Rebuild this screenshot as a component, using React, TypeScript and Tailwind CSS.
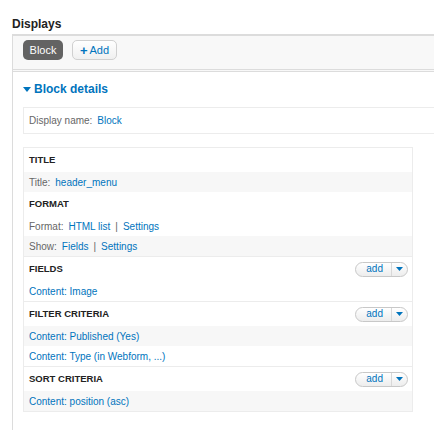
import React from 'react';

type Row = { label?: string; parts: string[]; shaded?: boolean };
type Section = { title: string; add?: boolean; rows: Row[] };

const sections: Section[] = [
  { title: 'Title', rows: [{ label: 'Title:', parts: ['header_menu'], shaded: true }] },
  {
    title: 'Format',
    rows: [
      { label: 'Format:', parts: ['HTML list', 'Settings'] },
      { label: 'Show:', parts: ['Fields', 'Settings'], shaded: true },
    ],
  },
  { title: 'Fields', add: true, rows: [{ parts: ['Content: Image'] }] },
  {
    title: 'Filter criteria',
    add: true,
    rows: [
      { parts: ['Content: Published (Yes)'], shaded: true },
      { parts: ['Content: Type (in Webform, ...)'] },
    ],
  },
  { title: 'Sort criteria', add: true, rows: [{ parts: ['Content: position (asc)'], shaded: true }] },
];

const AddButton: React.FC = () => (
  <div className="flex h-[15px] items-center rounded-full border border-[#c8c8c8] bg-gradient-to-b from-white to-[#ededed] text-[10px] leading-none text-[#0074bd]">
    <span className="pl-[10px] pr-[8px]">add</span>
    <span className="flex h-full items-center border-l border-[#d8d8d8] px-[4px]">
      <svg width="7" height="4" viewBox="0 0 7 4">
        <path d="M0 0h7L3.5 4z" fill="#0074bd" />
      </svg>
    </span>
  </div>
);

const App: React.FC = () => {
  return (
    <div className="h-[430px] w-[434px] overflow-hidden bg-white pt-[17px] font-['Liberation_Sans',Arial,sans-serif] text-[#333]">
      <h2 className="ml-[12px] text-[12px] font-bold leading-[14px] text-[#222]">Displays</h2>
      <div className="ml-[12px] mt-[3px] h-[400px] w-[440px] border-l border-t-2 border-[#dcdcdc]">
        <div className="flex h-[36px] items-start gap-[9px] border-b-[3px] border-double border-[#dcdcdc] bg-[#f8f8f8] pl-[10px] pt-[4px]">
          <span className="flex h-[20px] w-[40px] items-center justify-center rounded-[5px] bg-[#636363] text-[11px] text-white">
            Block
          </span>
          <span className="flex h-[20px] w-[45px] items-center justify-center gap-[2px] rounded-[5px] border border-[#d0d0d0] bg-gradient-to-b from-white to-[#f0f0f0] text-[11px] text-[#0074bd]">
            <span className="text-[13px] font-bold leading-none">+</span>Add
          </span>
        </div>
        <div className="pl-[10px]">
          <div className="mt-[9px] flex items-center gap-[3px] text-[12px] font-bold leading-[16px] text-[#0074bd]">
            <svg width="8" height="5" viewBox="0 0 8 5">
              <path d="M0 0h8L4 5z" fill="#0074bd" />
            </svg>
            Block details
          </div>
          <div className="mt-[10px] flex h-[27px] items-center border border-[#ececec] pl-[5px] text-[10px] text-[#666]">
            Display name:<span className="ml-[5px] text-[#0074bd]">Block</span>
          </div>
          <div className="mt-[13px] w-[390px] border border-[#ececec] text-[10px]">
            {sections.map((s, i) => (
              <div key={s.title} className={i > 0 && s.add ? 'border-t border-[#ececec]' : ''}>
                <div className="flex h-[24px] items-center justify-between pl-[5px] pr-[4px]">
                  <span className="text-[9.5px] font-bold uppercase text-[#222]">{s.title}</span>
                  {s.add && <AddButton />}
                </div>
                {s.rows.map((r, j) => (
                  <div
                    key={j}
                    className={`flex h-[20px] items-center pl-[5px] text-[#666] ${r.shaded ? 'bg-[#f7f7f7]' : ''}`}
                  >
                    {r.label && <span className="mr-[5px]">{r.label}</span>}
                    {r.parts.map((p, k) => (
                      <React.Fragment key={k}>
                        {k > 0 && <span className="mx-[5px]">|</span>}
                        <span className="text-[#0074bd]">{p}</span>
                      </React.Fragment>
                    ))}
                  </div>
                ))}
              </div>
            ))}
          </div>
        </div>
      </div>
    </div>
  );
};

export default App;
